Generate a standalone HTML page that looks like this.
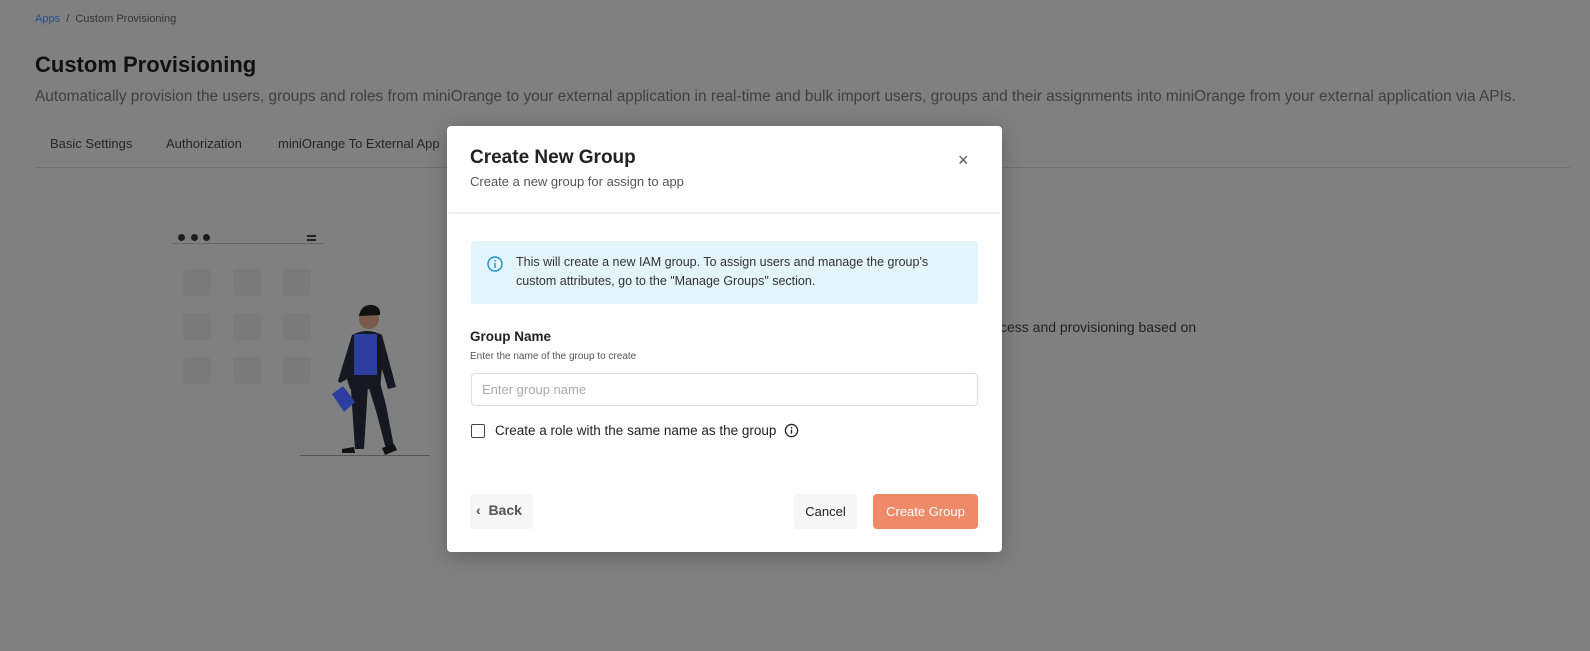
<!DOCTYPE html>
<html><head><style>
*{box-sizing:border-box;margin:0;padding:0}
body{width:1590px;height:651px;background:#808080;font-family:"Liberation Sans",sans-serif;position:relative;overflow:hidden}
.a{position:absolute;white-space:nowrap}
.sq{position:absolute;width:28px;height:27px;background:#7a7a7a;border-radius:4px}
</style></head><body>
<div class="a" style="left:35px;top:13px;font-size:11px;color:#343434"><span style="color:#2d4d8e">Apps</span> &nbsp;/&nbsp; Custom Provisioning</div>
<div class="a" style="left:35px;top:52px;font-size:22px;font-weight:bold;color:#111">Custom Provisioning</div>
<div class="a" style="left:35px;top:88px;font-size:15.4px;color:#3f3f3f">Automatically provision the users, groups and roles from miniOrange to your external application in real-time and bulk import users, groups and their assignments into miniOrange from your external application via APIs.</div>
<div class="a" style="left:50px;top:136px;font-size:13px;color:#262626">Basic Settings</div>
<div class="a" style="left:166px;top:136px;font-size:13px;color:#262626">Authorization</div>
<div class="a" style="left:278px;top:136px;font-size:13px;color:#262626">miniOrange To External App</div>
<div class="a" style="left:35px;top:167px;width:1535px;height:1px;background:#707070"></div>
<div class="a" style="left:1000px;top:319px;font-size:14px;color:#222">cess and provisioning based on</div>
<div class="a" style="left:178px;top:234px;width:7px;height:7px;border-radius:50%;background:#1e1e1e"></div>
<div class="a" style="left:191px;top:234px;width:7px;height:7px;border-radius:50%;background:#1e1e1e"></div>
<div class="a" style="left:203px;top:234px;width:7px;height:7px;border-radius:50%;background:#1e1e1e"></div>
<div class="a" style="left:307px;top:235px;width:9px;height:6px;border-top:2px solid #222;border-bottom:2px solid #222"></div>
<div class="a" style="left:173px;top:243px;width:150px;height:1px;background:#666"></div>
<div class="sq" style="left:183px;top:269px"></div><div class="sq" style="left:233px;top:269px"></div><div class="sq" style="left:283px;top:269px"></div>
<div class="sq" style="left:183px;top:313px"></div><div class="sq" style="left:233px;top:313px"></div><div class="sq" style="left:283px;top:313px"></div>
<div class="sq" style="left:183px;top:357px"></div><div class="sq" style="left:233px;top:357px"></div><div class="sq" style="left:283px;top:357px"></div>
<svg class="a" style="left:300px;top:300px" width="140" height="160" viewBox="300 300 140 160">
<circle cx="369" cy="319" r="10" fill="#7a5a4a"/><path d="M359 316q2-12 14-11q8 2 7 10l-20 1z" fill="#111"/>
<path d="M352 335q15-8 30 0l14 52l-8 2l-6-20l-2 20h-30l-3-10l-7 4l-2-2z" fill="#161821"/>
<rect x="354" y="334" width="23" height="44" fill="#2c3fa0"/>
<path d="M350 375h28l8 30l8 42l-8 2l-10-38l-8-26l-4 64h-9z" fill="#161821"/>
<path d="M332 394l11-8l12 16l-11 10z" fill="#2c3fa0"/>
<path d="M342 449l12-2l1 6h-13zM382 448l12-4l3 6l-12 5z" fill="#111"/>
<rect x="290" y="455" width="140" height="1" fill="#555"/>
</svg>
<div class="a" style="left:447px;top:126px;width:555px;height:426px;background:#fff;border-radius:4px;box-shadow:0 4px 20px rgba(0,0,0,.25)">
<div class="a" style="left:23px;top:21px;font-size:19px;font-weight:bold;color:#222">Create New Group</div>
<div class="a" style="left:23px;top:48px;font-size:13px;color:#555">Create a new group for assign to app</div>
<div class="a" style="left:511px;top:24px;font-size:18px;color:#555">×</div>
<div class="a" style="left:2px;top:86px;width:551px;height:2px;background:#eee"></div>
<div class="a" style="left:24px;top:115px;width:507px;height:63px;background:#e3f4fb;border-radius:3px"></div>
<svg class="a" style="left:40px;top:130px" width="16" height="16" viewBox="0 0 16 16"><circle cx="8" cy="8" r="7" fill="none" stroke="#1a8fd6" stroke-width="1.4"/><rect x="7.3" y="7" width="1.4" height="5" fill="#1a8fd6"/><circle cx="8" cy="4.8" r=".9" fill="#1a8fd6"/></svg>
<div class="a" style="left:69px;top:127px;font-size:12.5px;line-height:19px;color:#333">This will create a new IAM group. To assign users and manage the group's<br>custom attributes, go to the "Manage Groups" section.</div>
<div class="a" style="left:23px;top:203px;font-size:13.5px;font-weight:bold;color:#222">Group Name</div>
<div class="a" style="left:23px;top:225px;font-size:10px;color:#555">Enter the name of the group to create</div>
<div class="a" style="left:24px;top:247px;width:507px;height:33px;border:1px solid #ddd;border-radius:4px"></div>
<div class="a" style="left:35px;top:256px;font-size:13px;color:#aaa">Enter group name</div>
<div class="a" style="left:24px;top:298px;width:14px;height:14px;border:1.5px solid #444;border-radius:2px"></div>
<div class="a" style="left:48px;top:297px;font-size:13.5px;color:#222">Create a role with the same name as the group</div>
<svg class="a" style="left:337px;top:297px" width="15" height="15" viewBox="0 0 16 16"><circle cx="8" cy="8" r="6.5" fill="none" stroke="#222" stroke-width="1.4"/><rect x="7.3" y="7" width="1.4" height="4.5" fill="#222"/><circle cx="8" cy="5" r=".9" fill="#222"/></svg>
<div class="a" style="left:23px;top:368px;width:63px;height:35px;background:#f6f6f6;border-radius:3px"></div>
<div class="a" style="left:29px;top:376px;font-size:14px;font-weight:bold;color:#555">‹ &nbsp;Back</div>
<div class="a" style="left:347px;top:368px;width:63px;height:35px;background:#f6f6f6;border-radius:3px;text-align:center;line-height:35px;font-size:13px;color:#222">Cancel</div>
<div class="a" style="left:426px;top:368px;width:105px;height:35px;background:#ee8a68;border-radius:4px;text-align:center;line-height:35px;font-size:13px;color:#fff">Create Group</div>
</div>
</body></html>
